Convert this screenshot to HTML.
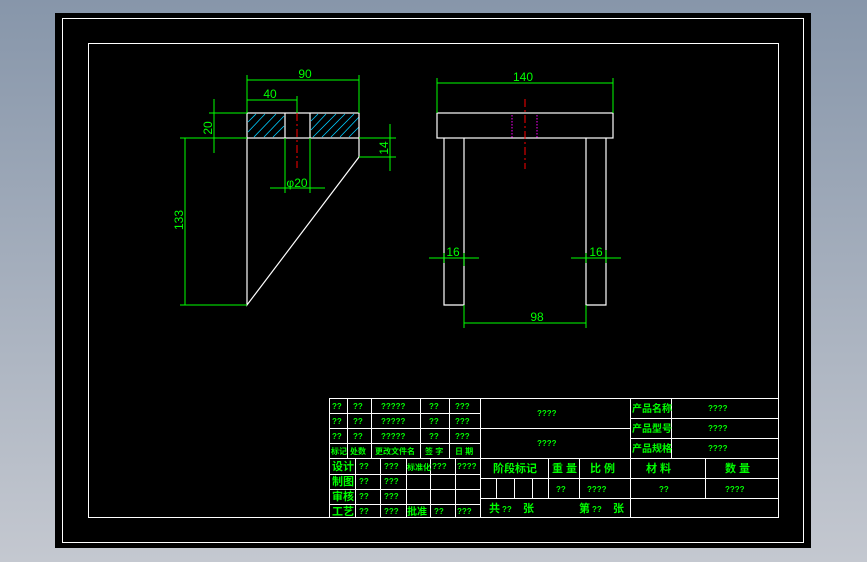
<!DOCTYPE html>
<html><head><meta charset="utf-8"><style>
html,body{margin:0;padding:0;width:867px;height:562px;overflow:hidden;background:linear-gradient(#8796aa,#c4c8d0);}
svg{position:absolute;left:0;top:0}
text{font-family:"Liberation Sans","Noto Sans CJK SC",sans-serif;fill:#00ff00;}
.s{font-size:8px;font-weight:bold}
.c{font-size:11px;font-weight:bold}
.d{font-size:12px}
</style></head><body>
<svg width="867" height="562" viewBox="0 0 867 562">
<rect x="55" y="13" width="756" height="535" fill="#000"/>
<rect x="62.5" y="18.5" width="741" height="524" fill="none" stroke="#fff" stroke-width="1"/>
<rect x="88.5" y="43.5" width="690" height="474" fill="none" stroke="#fff" stroke-width="1"/>

<g stroke="#0cf" stroke-width="0.8">
<line x1="248" y1="132" x2="265" y2="114"/><line x1="254" y1="137" x2="276" y2="114"/><line x1="264" y1="137" x2="284" y2="116"/><line x1="273" y1="137" x2="284" y2="126"/><line x1="248" y1="122" x2="256" y2="114"/>
<line x1="311" y1="130" x2="326" y2="114"/><line x1="313" y1="137" x2="336" y2="114"/><line x1="322" y1="137" x2="345" y2="114"/><line x1="331" y1="137" x2="354" y2="114"/><line x1="340" y1="137" x2="359" y2="117"/><line x1="349" y1="137" x2="359" y2="127"/><line x1="311" y1="121" x2="318" y2="114"/>
</g>
<g stroke="#fff" stroke-width="1.2" fill="none">
<rect x="247" y="113" width="112" height="25"/>
<line x1="285" y1="113" x2="285" y2="138"/><line x1="310" y1="113" x2="310" y2="138"/>
<polyline points="247,138 247,305 359,157 359,138"/>
<rect x="437" y="113" width="176" height="25"/>
<polyline points="444,138 444,305 464,305 464,138"/>
<polyline points="586,138 586,305 606,305 606,138"/>
</g>
<g stroke="#f00" stroke-width="1" stroke-dasharray="8,3,2,3">
<line x1="297" y1="113" x2="297" y2="168"/><line x1="525" y1="99" x2="525" y2="169"/>
</g>
<g stroke="#f0f" stroke-width="1" stroke-dasharray="1.5,1.5">
<line x1="512" y1="115" x2="512" y2="138"/><line x1="537" y1="115" x2="537" y2="138"/>
</g>
<g stroke="#0f0" stroke-width="1" fill="none">
<line x1="247" y1="75" x2="247" y2="113"/><line x1="359" y1="75" x2="359" y2="113"/><line x1="247" y1="80" x2="359" y2="80"/>
<line x1="297" y1="96" x2="297" y2="113"/><line x1="247" y1="100" x2="297" y2="100"/>
<line x1="209" y1="113" x2="247" y2="113"/><line x1="180" y1="138" x2="247" y2="138"/><line x1="214" y1="99" x2="214" y2="153"/>
<line x1="185" y1="138" x2="185" y2="305"/><line x1="180" y1="305" x2="247" y2="305"/>
<line x1="359" y1="138" x2="396" y2="138"/><line x1="359" y1="157" x2="396" y2="157"/><line x1="390" y1="124" x2="390" y2="171"/>
<line x1="285" y1="138" x2="285" y2="193"/><line x1="310" y1="138" x2="310" y2="193"/><line x1="270" y1="188" x2="325" y2="188"/>
<line x1="437" y1="78" x2="437" y2="113"/><line x1="613" y1="78" x2="613" y2="113"/><line x1="437" y1="83" x2="613" y2="83"/>
<line x1="429" y1="258" x2="479" y2="258"/><line x1="444" y1="253" x2="444" y2="263"/><line x1="464" y1="253" x2="464" y2="266"/>
<line x1="571" y1="258" x2="621" y2="258"/><line x1="586" y1="253" x2="586" y2="263"/><line x1="606" y1="250" x2="606" y2="263"/>
<line x1="464" y1="305" x2="464" y2="328"/><line x1="586" y1="305" x2="586" y2="328"/><line x1="464" y1="323" x2="586" y2="323"/>
</g>
<text class="d" x="305" y="78" text-anchor="middle">90</text>
<text class="d" x="270" y="98" text-anchor="middle">40</text>
<text class="d" x="297" y="187" text-anchor="middle">φ20</text>
<text class="d" x="523" y="81" text-anchor="middle">140</text>
<text class="d" x="453" y="256" text-anchor="middle">16</text>
<text class="d" x="596" y="256" text-anchor="middle">16</text>
<text class="d" x="537" y="321" text-anchor="middle">98</text>
<text class="d" transform="translate(212,128) rotate(-90)" text-anchor="middle">20</text>
<text class="d" transform="translate(183,220) rotate(-90)" text-anchor="middle">133</text>
<text class="d" transform="translate(388,148) rotate(-90)" text-anchor="middle">14</text>

<g stroke="#fff" stroke-width="1" fill="none">
<rect x="329.5" y="398.5" width="449" height="119"/>
<line x1="329" y1="413.5" x2="480" y2="413.5"/><line x1="329" y1="428.5" x2="630" y2="428.5"/><line x1="329" y1="443.5" x2="480" y2="443.5"/><line x1="329" y1="458.5" x2="779" y2="458.5"/>
<line x1="347.5" y1="398" x2="347.5" y2="458"/><line x1="371.5" y1="398" x2="371.5" y2="458"/><line x1="420.5" y1="398" x2="420.5" y2="458"/><line x1="449.5" y1="398" x2="449.5" y2="458"/>
<line x1="480.5" y1="398" x2="480.5" y2="518"/>
<line x1="329" y1="474.5" x2="480" y2="474.5"/><line x1="329" y1="489.5" x2="480" y2="489.5"/><line x1="329" y1="504.5" x2="480" y2="504.5"/>
<line x1="355.5" y1="458" x2="355.5" y2="518"/><line x1="380.5" y1="458" x2="380.5" y2="518"/><line x1="406.5" y1="458" x2="406.5" y2="518"/><line x1="430.5" y1="458" x2="430.5" y2="518"/><line x1="455.5" y1="458" x2="455.5" y2="518"/>
<line x1="630.5" y1="398" x2="630.5" y2="518"/><line x1="671.5" y1="398" x2="671.5" y2="458"/>
<line x1="630" y1="418.5" x2="779" y2="418.5"/><line x1="630" y1="438.5" x2="779" y2="438.5"/>
<line x1="480" y1="478.5" x2="779" y2="478.5"/><line x1="480" y1="498.5" x2="779" y2="498.5"/>
<line x1="548.5" y1="458" x2="548.5" y2="498"/><line x1="579.5" y1="458" x2="579.5" y2="498"/><line x1="705.5" y1="458" x2="705.5" y2="498"/>
<line x1="496.5" y1="478" x2="496.5" y2="498"/><line x1="514.5" y1="478" x2="514.5" y2="498"/><line x1="532.5" y1="478" x2="532.5" y2="498"/>
</g>
<g class="s">
<text x="332" y="409">??</text><text x="353" y="409">??</text><text x="381" y="409">?????</text><text x="429" y="409">??</text><text x="455" y="409">???</text>
<text x="332" y="424">??</text><text x="353" y="424">??</text><text x="381" y="424">?????</text><text x="429" y="424">??</text><text x="455" y="424">???</text>
<text x="332" y="439">??</text><text x="353" y="439">??</text><text x="381" y="439">?????</text><text x="429" y="439">??</text><text x="455" y="439">???</text>
<text x="331" y="454">标记</text><text x="350" y="454">处数</text><text x="375" y="454">更改文件名</text><text x="425" y="454">签 字</text><text x="455" y="454">日 期</text>
<text x="359" y="469">??</text><text x="384" y="469">???</text><text x="432" y="469">???</text><text x="457" y="469">????</text>
<text x="359" y="484">??</text><text x="384" y="484">???</text>
<text x="359" y="499">??</text><text x="384" y="499">???</text>
<text x="359" y="514">??</text><text x="384" y="514">???</text><text x="434" y="514">??</text><text x="457" y="514">???</text>
<text x="556" y="492">??</text><text x="587" y="492">????</text><text x="659" y="492">??</text><text x="725" y="492">????</text>
<text x="537" y="416">????</text><text x="537" y="446">????</text>
<text x="708" y="411">????</text><text x="708" y="431">????</text><text x="708" y="451">????</text>
<text x="502" y="512">??</text><text x="592" y="512">??</text>
</g>
<g class="c">
<text x="332" y="470">设计</text><text x="332" y="485">制图</text><text x="332" y="500">审核</text><text x="332" y="515">工艺</text>
<text x="407" y="470" font-size="8">标准化</text><text x="407" y="515" font-size="10">批准</text>
<text x="493" y="472">阶段标记</text><text x="552" y="472">重  量</text><text x="590" y="472">比 例</text><text x="646" y="472">材    料</text><text x="725" y="472">数  量</text>
<text x="632" y="412" font-size="10">产品名称</text><text x="632" y="432" font-size="10">产品型号</text><text x="632" y="452" font-size="10">产品规格</text>
<text x="489" y="512">共</text><text x="523" y="512">张</text><text x="579" y="512">第</text><text x="613" y="512">张</text>
</g>
</svg>
</body></html>
